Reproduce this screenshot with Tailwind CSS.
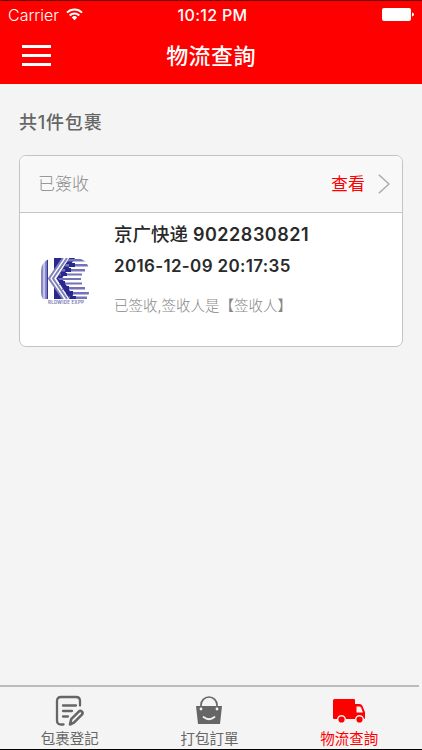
<!DOCTYPE html>
<html lang="zh-Hant">
<head>
  <meta charset="UTF-8" />
  <meta name="viewport" content="width=device-width, initial-scale=1.0"/>
  <title>物流查詢</title>
  <script src="https://cdn.jsdelivr.net/npm/@tailwindcss/browser@4"></script>
</head>
<body class="bg-[#f4f4f4] h-[750px] flex flex-col overflow-hidden whitespace-nowrap font-[Inter,'Noto_Sans_CJK_TC',sans-serif]">

  <!-- Header -->
  <header class="h-[84px] shrink-0 bg-[#ff0000] border-t border-[#6b0000] text-white">
    <!-- Status bar -->
    <div class="h-[27px] grid grid-cols-3 items-center px-2">
      <div class="flex items-center gap-[7px]">
        <span class="pt-[2px] text-[16px] leading-[25px] font-light">Carrier</span>
        <svg class="w-[17px] h-[13px]" viewBox="0 0 17 13" fill="none" stroke="currentColor" stroke-width="2">
          <path d="M1 4.6a10.6 10.6 0 0 1 15 0M3.7 7.5a6.8 6.8 0 0 1 9.6 0" />
          <path d="M8.5 12.2L5.8 9.4a3.8 3.8 0 0 1 5.4 0z" fill="currentColor" stroke="none" />
        </svg>
      </div>
      <div class="pl-[3px] pt-[2px] text-center text-[16px] leading-[25px] font-medium tracking-[0.3px]">10:12 PM</div>
      <svg class="w-[32px] h-[13px] justify-self-end" viewBox="0 0 32 13" fill="currentColor">
        <rect x="0" y="0" width="29" height="13" rx="2" />
        <path d="M30 4.5q2 .5 2 2t-2 2z" />
      </svg>
    </div>
    <!-- Nav bar -->
    <div class="h-[55px] grid grid-cols-3 items-center px-[22px]">
      <svg class="w-[29px] h-[21px]" viewBox="0 0 29 21" fill="currentColor">
        <path d="M0 0h29v3H0zM0 9h29v3H0zM0 18h29v3H0z" />
      </svg>
      <h1 class="justify-self-center text-[22px] tracking-[0.4px] leading-8 font-medium">物流查詢</h1>
    </div>
  </header>

  <!-- Package list -->
  <main class="flex-1 px-[19px] pt-[26px]">
    <h2 class="text-[18px] tracking-[0.8px] leading-[26px] font-medium text-[#666]">共1件包裹</h2>

    <div class="mt-[19px] h-[192px] rounded-[7px] border border-[#c4c4c4] bg-white overflow-hidden">
      <div class="h-[57px] bg-[#f8f8f8] border-b border-[#c4c4c4] flex items-center pl-[18px] pr-3">
        <span class="pt-px text-[17px] font-light text-[#888]">已簽收</span>
        <span class="ml-auto pt-px text-[17px] text-[#f00]">查看</span>
        <svg class="ml-[13px] w-3 h-5" viewBox="0 0 12 20" fill="none" stroke="#aaa" stroke-width="1.4">
          <path d="M.8.8L11 10 .8 19.2" />
        </svg>
      </div>
      <div class="flex">
        <!-- Courier logo -->
        <svg class="ml-[21px] mt-[45px] w-[48px] h-[47px] shrink-0" viewBox="0 0 48 47">
          <defs>
            <clipPath id="logo"><rect width="48" height="47" rx="13" /></clipPath>
          </defs>
          <g clip-path="url(#logo)">
            <path fill="#8989c5" d="M0 0h2.500v41H0zM3.500 0h2v41h-2z" />
            <path fill="#35359b" d="M5.500 0h1.500v41H5.500z" />
            <path fill="#28288f" d="M13 0h9L13 13zM13 28l9 13h-9z" />
            <path fill="none" stroke="#8080bd" stroke-width="2" d="M22 0L8 20.500 22 41M26 0L12 20.500 26 41" />
            <path fill="#28288f" d="M28 0h6L21 20.500 34 41h-6L15 20.500z" />
            <path fill="#7373b8" d="M28 1h18v2.500H26zM25 6h23v2.500H24zM22 11h22v2.500H20zM19 15.500h22v2H18zM17 20h23v2H18zM19 24.500h22v2H20zM21 29h23v2.500H23zM24 34h24v2.500H26zM27 38.500h19v2.500H29z" />
            <path fill="#28288f" d="M28 5h6v4h-6zM24 10h6v4h-6zM20 15h6v3h-6zM18 23h6v4h-6zM21 28h7v4h-7zM25 33h7v4h-7zM29 38h6v3h-6z" />
            <path fill="none" stroke="#fff" stroke-width=".7" d="M28 0L15 20.500 28 41" />
            <text x="7" y="45.500" font-size="4.500" font-weight="700" textLength="36" fill="#8080b8">RLDWIDE EXPR</text>
          </g>
        </svg>
        <div class="ml-[25px] pt-[7px] text-[#2a2a2a] font-[Inter,'Noto_Sans_CJK_SC',sans-serif]" lang="zh-Hans">
          <div class="h-[28px] leading-[28px] text-[18.500px] font-medium">京广快递 <span class="font-semibold text-[18px] tracking-[0.52px]">9022830821</span></div>
          <div class="mt-[4px] h-[28px] leading-[28px] text-[17px] tracking-[0.33px] font-semibold">2016-12-09 20:17:35</div>
          <div class="mt-[14px] h-[24px] leading-[24px] text-[14.500px] font-light text-[#888]">已签收,签收人是【签收人】</div>
        </div>
      </div>
    </div>
  </main>

  <!-- Tab bar -->
  <nav class="h-[65px] shrink-0 border-b border-black text-[#666] text-[14.500px]">
    <div class="h-[2px] w-[419px] bg-[#bbb]"></div>
    <div class="grid grid-cols-3 w-[419px]">
      <a class="flex flex-col items-center pt-[8px]">
        <svg class="w-[30px] h-[31px]" viewBox="0 0 30 31" fill="none" stroke="currentColor" stroke-width="2.300" stroke-linecap="round" stroke-linejoin="round">
          <path d="M8.500 29.500H6q-4 0-4-4V6q0-4 4-4h15q4 0 4 4v4.500M8 10.500h13M8 16h9M8 21.500h5" />
          <path d="M15 29.500l1.200-5.300 7.600-7.600q1.500-1.300 3 0t.1 3l-8 8z" stroke-width="2.600" />
        </svg>
        <span class="leading-5 mt-[3px]">包裹登記</span>
      </a>
      <a class="flex flex-col items-center pt-[8px]">
        <svg class="w-[26px] h-[31px]" viewBox="0 0 26 31" fill="none" stroke="currentColor">
          <path d="M5 13v-3a8 8 0 0 1 16 0v3" stroke-width="1.700" />
          <path d="M0 11h26l-2 18H2z" fill="currentColor" stroke="none" />
          <circle cx="5" cy="14" r="1.400" fill="#f4f4f4" stroke="none" />
          <circle cx="21" cy="14" r="1.400" fill="#f4f4f4" stroke="none" />
          <path d="M7.500 22q5.500 4.500 11 0" stroke="#f4f4f4" stroke-width="1.700" stroke-linecap="round" />
        </svg>
        <span class="leading-5 mt-[3px]">打包訂單</span>
      </a>
      <a class="flex flex-col items-center pt-[9px] text-[#f00]">
        <svg class="w-[32px] h-[31px]" viewBox="0 0 32 31" fill="currentColor">
          <path d="M1.500 3H21q1 0 1 1v4h4.500q2 0 3 2l2 5q.5 1 .5 2v5q0 1-1 1H1q-1 0-1-1V4.500Q0 3 1.500 3z" />
          <path d="M23.500 10.500h3q1 0 1.500 1l2 5h-6.500z" fill="#f4f4f4" />
          <circle cx="8.500" cy="23.500" r="3.800" stroke="#f4f4f4" stroke-width="1.400" />
          <circle cx="26.500" cy="23.500" r="3.800" stroke="#f4f4f4" stroke-width="1.400" />
        </svg>
        <span class="leading-5 mt-[2px]">物流查詢</span>
      </a>
    </div>
  </nav>

</body>
</html>
